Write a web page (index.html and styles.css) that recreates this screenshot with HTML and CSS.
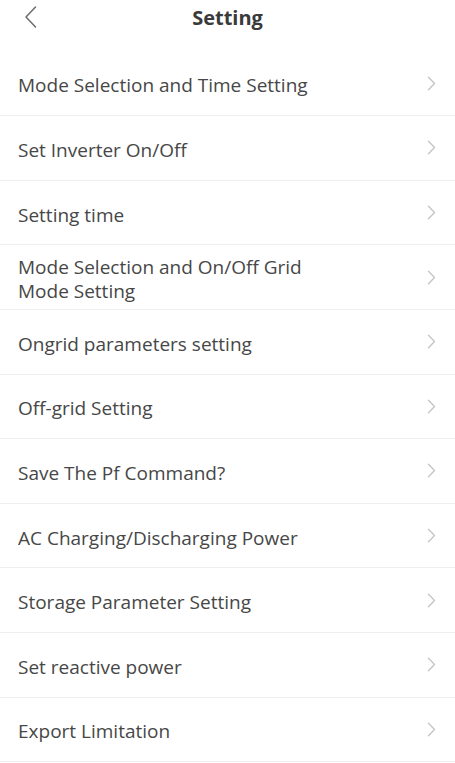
FILE: index.html
```html
<!DOCTYPE html>
<html>
<head>
<meta charset="utf-8">
<link rel="stylesheet" href="styles.css">
</head>
<body>
<div class="page">
  <header class="header">
    <svg class="back" width="14" height="24" viewBox="0 0 14 24"><path d="M11.5 2 L2 12 L11.5 22" fill="none" stroke="#707070" stroke-width="1.6" stroke-linecap="round" stroke-linejoin="round"/></svg>
    <h1 class="title">Setting</h1>
  </header>
  <ul class="list">
    <li class="row"><span class="label">Mode Selection and Time Setting</span><svg class="chev" width="9" height="15" viewBox="0 0 9 15"><path d="M1.5 1.2 L7.5 7.5 L1.5 13.8" fill="none" stroke="#c6c6c6" stroke-width="1.4" stroke-linecap="round" stroke-linejoin="round"/></svg></li>
    <li class="row"><span class="label">Set Inverter On/Off</span><svg class="chev" width="9" height="15" viewBox="0 0 9 15"><path d="M1.5 1.2 L7.5 7.5 L1.5 13.8" fill="none" stroke="#c6c6c6" stroke-width="1.4" stroke-linecap="round" stroke-linejoin="round"/></svg></li>
    <li class="row"><span class="label">Setting time</span><svg class="chev" width="9" height="15" viewBox="0 0 9 15"><path d="M1.5 1.2 L7.5 7.5 L1.5 13.8" fill="none" stroke="#c6c6c6" stroke-width="1.4" stroke-linecap="round" stroke-linejoin="round"/></svg></li>
    <li class="row"><span class="label">Mode Selection and On/Off Grid<br>Mode Setting</span><svg class="chev" width="9" height="15" viewBox="0 0 9 15"><path d="M1.5 1.2 L7.5 7.5 L1.5 13.8" fill="none" stroke="#c6c6c6" stroke-width="1.4" stroke-linecap="round" stroke-linejoin="round"/></svg></li>
    <li class="row"><span class="label">Ongrid parameters setting</span><svg class="chev" width="9" height="15" viewBox="0 0 9 15"><path d="M1.5 1.2 L7.5 7.5 L1.5 13.8" fill="none" stroke="#c6c6c6" stroke-width="1.4" stroke-linecap="round" stroke-linejoin="round"/></svg></li>
    <li class="row"><span class="label">Off-grid Setting</span><svg class="chev" width="9" height="15" viewBox="0 0 9 15"><path d="M1.5 1.2 L7.5 7.5 L1.5 13.8" fill="none" stroke="#c6c6c6" stroke-width="1.4" stroke-linecap="round" stroke-linejoin="round"/></svg></li>
    <li class="row"><span class="label">Save The Pf Command?</span><svg class="chev" width="9" height="15" viewBox="0 0 9 15"><path d="M1.5 1.2 L7.5 7.5 L1.5 13.8" fill="none" stroke="#c6c6c6" stroke-width="1.4" stroke-linecap="round" stroke-linejoin="round"/></svg></li>
    <li class="row"><span class="label">AC Charging/Discharging Power</span><svg class="chev" width="9" height="15" viewBox="0 0 9 15"><path d="M1.5 1.2 L7.5 7.5 L1.5 13.8" fill="none" stroke="#c6c6c6" stroke-width="1.4" stroke-linecap="round" stroke-linejoin="round"/></svg></li>
    <li class="row"><span class="label">Storage Parameter Setting</span><svg class="chev" width="9" height="15" viewBox="0 0 9 15"><path d="M1.5 1.2 L7.5 7.5 L1.5 13.8" fill="none" stroke="#c6c6c6" stroke-width="1.4" stroke-linecap="round" stroke-linejoin="round"/></svg></li>
    <li class="row"><span class="label">Set reactive power</span><svg class="chev" width="9" height="15" viewBox="0 0 9 15"><path d="M1.5 1.2 L7.5 7.5 L1.5 13.8" fill="none" stroke="#c6c6c6" stroke-width="1.4" stroke-linecap="round" stroke-linejoin="round"/></svg></li>
    <li class="row"><span class="label">Export Limitation</span><svg class="chev" width="9" height="15" viewBox="0 0 9 15"><path d="M1.5 1.2 L7.5 7.5 L1.5 13.8" fill="none" stroke="#c6c6c6" stroke-width="1.4" stroke-linecap="round" stroke-linejoin="round"/></svg></li>
  </ul>
</div>
</body>
</html>
```
FILE: styles.css
```css
* { box-sizing: border-box; }
html, body { margin: 0; padding: 0; background: #fff; }
body { font-family: "Open Sans", "Noto Sans", sans-serif; color: #444; overflow: hidden; }
.page { width: 455px; }
.header { position: relative; height: 51.6px; display: flex; align-items: flex-start; justify-content: center; }
.back { position: absolute; left: 24px; top: 5px; }
.title { margin: 5px 0 0; font-size: 20px; font-weight: 700; color: #3a3a3a; line-height: 26px; }
.list { list-style: none; margin: 0; padding: 0; }
.row { height: 64.6px; border-bottom: 1px solid #efefef; display: flex; align-items: center; justify-content: space-between; padding: 0 19px 0 18px; }
.label { font-size: 19px; line-height: 24px; color: #474747; padding-top: 4px; }
.chev { display: block; flex: none; }
```
